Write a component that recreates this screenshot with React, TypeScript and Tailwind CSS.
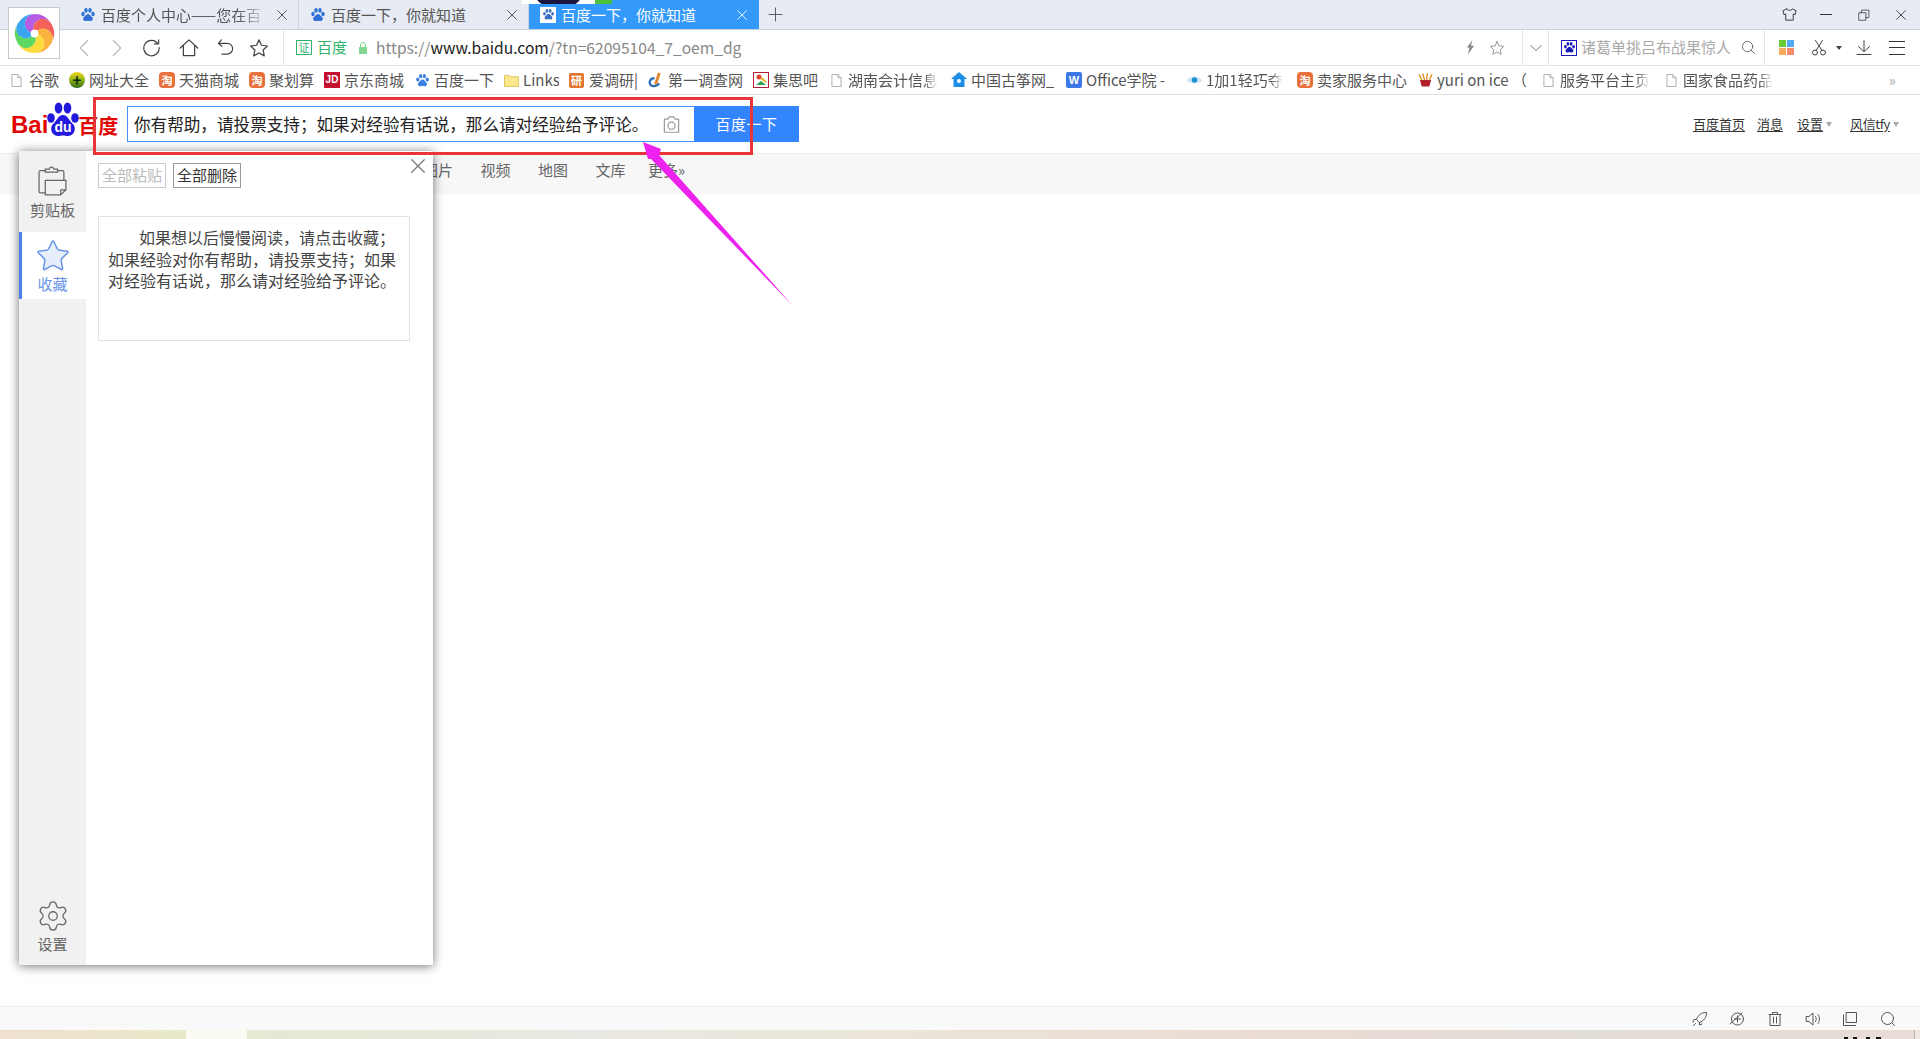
import React from 'react';
import { Settings, Star } from 'lucide-react';

const Paw = ({ className = '', color = '#2f6fd6' }: { className?: string; color?: string }) => (
  <svg viewBox="0 0 16 16" className={className} fill={color}>
    <ellipse cx="3" cy="7" rx="1.7" ry="2.2" />
    <ellipse cx="6" cy="3.4" rx="1.7" ry="2.3" />
    <ellipse cx="10" cy="3.4" rx="1.7" ry="2.3" />
    <ellipse cx="13" cy="7" rx="1.7" ry="2.2" />
    <path d="M8 7c-2 0-2.400 2-4 3-1.600 1.200-.8 4 1.500 4 1 0 1.600-.3 2.500-.3s1.500.3 2.500.3c2.300 0 3.100-2.800 1.500-4-1.600-1-2-3-4-3z" />
  </svg>
);

const Swirl = () => {
  const colors = ['#b45ce6', '#f4605a', '#fbb23e', '#fbdc3c', '#5fd861', '#3ba6ee'];
  return (
    <svg viewBox="-21 -21 42 42" className="w-[41px] h-[41px]">
      {colors.map((c, i) => (
        <path key={c} transform={`rotate(${i * 60})`} fill={c} d="M0 0A10 10 0 0 1 0-20A20 20 0 0 1 17.320-10A10 10 0 0 0 0 0Z" />
      ))}
      <circle r="4" fill="#fff" />
    </svg>
  );
};

const Line = ({ children, className = '', box = '0 0 16 16' }: { children: React.ReactNode; className?: string; box?: string }) => (
  <svg viewBox={box} className={className} fill="none" stroke="currentColor" strokeWidth="1" strokeLinecap="round" strokeLinejoin="round">
    {children}
  </svg>
);

const XIcon = ({ className = '' }: { className?: string }) => (
  <Line className={className}><path d="M3 3l10 10M13 3L3 13" /></Line>
);

const PageIcon = () => (
  <svg viewBox="0 0 12 14" className="w-[11px] h-[13px] shrink-0" fill="#fff" stroke="#a9a9a9">
    <path d="M1 .5h6.500L11 4v9.500H1z" />
    <path d="M7.500.5V4H11" fill="none" />
  </svg>
);

const Tao = () => (
  <span className="w-[16px] h-[16px] shrink-0 rounded-[4px] bg-[#e9703a] text-white text-[11px] leading-[16px] text-center font-bold">淘</span>
);

const favicon = (kind: string) => {
  switch (kind) {
    case 'page':
      return <PageIcon />;
    case 'globe':
      return (
        <span className="w-[16px] h-[16px] shrink-0 rounded-full bg-gradient-to-b from-[#f2d61c] via-[#8fb51a] to-[#2c6a12] text-[#0c2a10] text-[15px] leading-[15px] text-center font-bold">+</span>
      );
    case 'tao':
      return <Tao />;
    case 'jd':
      return <span className="w-[16px] h-[16px] shrink-0 bg-[#c4112f] text-white text-[10px] leading-[16px] text-center font-bold font-['Liberation_Sans',sans-serif]">JD</span>;
    case 'paw':
      return <Paw className="w-[15px] h-[15px] shrink-0" color="#3b7fe0" />;
    case 'folder':
      return (
        <svg viewBox="0 0 16 14" className="w-[15px] h-[13px] shrink-0" fill="#fbe88d" stroke="#dcc156">
          <path d="M.5 1.500h5.500l1 1.500h8.500v10.500H.5z" />
        </svg>
      );
    case 'yan':
      return <span className="w-[15px] h-[15px] shrink-0 rounded-[2px] bg-[#e2752f] text-white text-[11px] leading-[15px] text-center font-bold">研</span>;
    case 'd':
      return (
        <svg viewBox="0 0 16 16" className="w-[15px] h-[16px] shrink-0" fill="none">
          <path d="M12 .5L8 13" stroke="#e8862a" strokeWidth="3" />
          <path d="M7 6C2 6 .5 11 3 13.500c2.500 2 7 1 9-2" stroke="#2d6db5" strokeWidth="2.400" />
        </svg>
      );
    case 'jisi':
      return (
        <svg viewBox="0 0 16 16" className="w-[16px] h-[16px] shrink-0">
          <rect x=".5" y=".5" width="15" height="15" fill="#fff" stroke="#b32036" />
          <path d="M3 13l5-4 5 4z" fill="#2e9e4f" />
          <circle cx="6" cy="5" r="2.500" fill="#e0402f" />
          <path d="M8 6l5 4" stroke="#e8b21f" strokeWidth="2" />
        </svg>
      );
    case 'house':
      return (
        <svg viewBox="0 0 16 16" className="w-[16px] h-[16px] shrink-0" fill="#1b8fe8">
          <path d="M8 0l8 7h-2.500v8h-11V7H0z" />
          <circle cx="8" cy="9" r="2" fill="#fff" />
        </svg>
      );
    case 'office':
      return <span className="w-[16px] h-[16px] shrink-0 rounded-[2px] bg-[#3c78e6] text-white text-[11px] leading-[16px] text-center font-bold font-['Liberation_Sans',sans-serif]">W</span>;
    case 'eye':
      return (
        <svg viewBox="0 0 18 12" className="w-[17px] h-[11px] shrink-0">
          <path d="M0 6c4-6 13-6 18 0-5 4-14 4-18 0z" fill="#cfe6f5" />
          <circle cx="9" cy="5.500" r="3" fill="#1f8fd0" />
        </svg>
      );
    default:
      return (
        <svg viewBox="0 0 16 14" className="w-[15px] h-[14px] shrink-0">
          <path d="M2 7h12l-2 7H4z" fill="#b3202c" />
          <path d="M1 1l3 6M5 0l2 7M10 0L9 7M15 1l-3 6" stroke="#e0962a" strokeWidth="1.500" />
        </svg>
      );
  }
};

const bookmarks = [
  { kind: 'page', text: '谷歌', w: 'w-[58px]', gap: 'gap-[7px]' },
  { kind: 'globe', text: '网址大全', w: 'w-[90px]', gap: 'gap-[4px]' },
  { kind: 'tao', text: '天猫商城', w: 'w-[90px]', gap: 'gap-[4px]' },
  { kind: 'tao', text: '聚划算', w: 'w-[75px]', gap: 'gap-[4px]' },
  { kind: 'jd', text: '京东商城', w: 'w-[91px]', gap: 'gap-[4px]' },
  { kind: 'paw', text: '百度一下', w: 'w-[89px]', gap: 'gap-[4px]' },
  { kind: 'folder', text: 'Links', w: 'w-[65px]', gap: 'gap-[4px]' },
  { kind: 'yan', text: '爱调研|', w: 'w-[79px]', gap: 'gap-[5px]' },
  { kind: 'd', text: '第一调查网', w: 'w-[105px]', gap: 'gap-[5px]' },
  { kind: 'jisi', text: '集思吧', w: 'w-[78px]', gap: 'gap-[4px]' },
  { kind: 'page', text: '湖南会计信息', w: 'w-[120px]', gap: 'gap-[6px]', fade: true },
  { kind: 'house', text: '中国古筝网_', w: 'w-[115px]', gap: 'gap-[4px]' },
  { kind: 'office', text: 'Office学院 -', w: 'w-[120px]', gap: 'gap-[4px]' },
  { kind: 'eye', text: '1加1轻巧夺', w: 'w-[111px]', gap: 'gap-[3px]', fade: true },
  { kind: 'tao', text: '卖家服务中心', w: 'w-[121px]', gap: 'gap-[4px]' },
  { kind: 'yuri', text: 'yuri on ice （', w: 'w-[125px]', gap: 'gap-[4px]' },
  { kind: 'page', text: '服务平台主页', w: 'w-[123px]', gap: 'gap-[6px]', fade: true },
  { kind: 'page', text: '国家食品药品', w: 'w-[117px]', gap: 'gap-[6px]', fade: true },
];

const TabItem = ({ title, active = false, fade = false }: { title: string; active?: boolean; fade?: boolean }) => (
  <div className={`w-[230px] flex items-center ${active ? 'pl-[11px] bg-[#3399fa] text-white' : 'pl-[11px] text-[#555] border-r border-[#cfd4dd]'}`}>
    {active ? (
      <span className="w-[16px] h-[16px] bg-white flex items-center justify-center shrink-0">
        <Paw className="w-[13px] h-[13px]" color="#3f6fc4" />
      </span>
    ) : (
      <Paw className="w-[16px] h-[16px] shrink-0" />
    )}
    <span className={`ml-[5px] w-[167px] text-[15px] leading-[22px] whitespace-nowrap overflow-hidden ${fade ? "[mask-image:linear-gradient(to_right,black_82%,transparent)]" : ''}`}>{title}</span>
    <XIcon className={`w-[14px] h-[14px] ml-[7px] shrink-0 ${active ? 'text-white' : 'text-[#444]'}`} />
  </div>
);

const NavLink = ({ children, className = '' }: { children: React.ReactNode; className?: string }) => (
  <span className={`w-[30px] text-[15px] leading-[20px] text-[#666] whitespace-nowrap ${className}`}>{children}</span>
);

export default function App() {
  return (
    <div className="relative w-[1920px] h-[1039px] overflow-hidden bg-white flex flex-col font-['Noto_Sans_CJK_SC','Noto_Sans',sans-serif] text-[#444]">
      {/* tabs */}
      <div className="h-[30px] shrink-0 bg-[#e7ebf4] border-b border-[#cdd2da] flex pl-[69px]">
        <TabItem title="百度个人中心——您在百" fade />
        <TabItem title="百度一下，你就知道" />
        <TabItem title="百度一下，你就知道" active />
        <Line className="w-[15px] h-[15px] ml-[9px] self-center text-[#555]">
          <path d="M8 1v14M1 8h14" />
        </Line>
        <div className="ml-auto pr-[12px] flex items-center text-[#333]">
          <Line className="w-[15px] h-[15px]">
            <path d="M5 2L1 4l1 4 2-.5V14h8V7.500l2 .5 1-4-4-2c-.5 2-5.500 2-6 0z" />
          </Line>
          <span className="ml-[23px] w-[12px] h-px bg-[#333]" />
          <Line className="ml-[26px] w-[12px] h-[12px]">
            <path d="M1.500 5h9v10h-9zM4.500 5V1.500h10v10h-4" />
          </Line>
          <XIcon className="ml-[24px] w-[14px] h-[14px]" />
        </div>
      </div>

      {/* toolbar */}
      <div className="h-[36px] shrink-0 border-b border-[#e4e4e4] flex items-center">
        <div className="w-[67px] shrink-0" />
        <div className="w-[33px] flex justify-center text-[#bdbdbd]">
          <Line className="w-[20px] h-[20px]"><path d="M11 2L5 8l6 6" /></Line>
        </div>
        <div className="w-[33px] flex justify-center text-[#bdbdbd]">
          <Line className="w-[20px] h-[20px]"><path d="M5 2l6 6-6 6" /></Line>
        </div>
        <div className="w-[37px] flex justify-center text-[#444]">
          <Line className="w-[19px] h-[19px]"><path d="M13.500 5A6.500 6.500 0 1 0 14.500 8M14 1.500V5h-3.500" /></Line>
        </div>
        <div className="w-[38px] flex justify-center text-[#444]">
          <Line className="w-[20px] h-[20px]"><path d="M1 8l7-6.500L15 8M3.500 6.500V14h9V6.500" /></Line>
        </div>
        <div className="w-[34px] flex justify-center text-[#444]">
          <Line className="w-[19px] h-[19px]"><path d="M4.500 1.500L2 4.500l3 2.500M2.500 4.500h7a4.500 4.500 0 0 1 0 9H5" /></Line>
        </div>
        <div className="w-[34px] flex justify-center text-[#444]">
          <Line className="w-[20px] h-[20px]"><path d="M8 1.500l2 4.300 4.700.6-3.400 3.200.9 4.700L8 12l-4.200 2.300.9-4.700L1.300 6.400 6 5.800z" /></Line>
        </div>
        <div className="w-[8px] self-stretch border-r border-[#e6e6e6]" />
        <div className="ml-[12px] flex items-center">
          <span className="w-[16px] h-[15px] border border-[#2fb56b] text-[#2fb56b] text-[11px] leading-[13px] text-center">证</span>
          <span className="ml-[5px] pb-[2px] text-[15px] leading-[20px] text-[#2fb56b]">百度</span>
          <svg viewBox="0 0 10 12" className="ml-[11px] w-[10px] h-[12px]" fill="#7fd88e">
            <path d="M1 5h8v7H1z" />
            <path d="M2.500 5V3a2.500 2.500 0 0 1 5 0v2" fill="none" stroke="#7fd88e" />
          </svg>
          <span className="ml-[8px] pb-[2px] text-[15.600px] leading-[20px] text-[#888] whitespace-nowrap">
            https://<span className="text-[#222]">www.baidu.com</span>/?tn=62095104_7_oem_dg
          </span>
        </div>
        <div className="ml-auto w-[462px] self-stretch flex items-center shrink-0">
          <div className="w-[24px] flex justify-center">
            <svg viewBox="0 0 10 16" className="w-[9px] h-[15px]" fill="#888">
              <path d="M7 0L1 8h3l-2 8 7-10H5.500z" />
            </svg>
          </div>
          <div className="w-[30px] flex justify-center text-[#999]">
            <Line className="w-[16px] h-[16px]"><path d="M8 1.500l2 4.300 4.700.6-3.400 3.200.9 4.700L8 12l-4.200 2.300.9-4.700L1.300 6.400 6 5.800z" /></Line>
          </div>
          <div className="w-[10px]" />
          <div className="w-[27px] self-stretch border-x border-[#e6e6e6] flex items-center justify-center text-[#666]">
            <Line className="w-[14px] h-[14px]"><path d="M2 5l6 6 6-6" /></Line>
          </div>
          <div className="w-[216px] self-stretch border-r border-[#e6e6e6] flex items-center pl-[12px]">
            <span className="w-[16px] h-[16px] bg-white border border-[#1a1ab8] flex items-center justify-center shrink-0">
              <Paw className="w-[13px] h-[13px]" color="#1a1ab8" />
            </span>
            <span className="ml-[4px] pb-[2px] w-[150px] text-[15px] leading-[20px] text-[#aaa] whitespace-nowrap">诸葛单挑吕布战果惊人</span>
            <Line className="ml-[10px] w-[15px] h-[15px] text-[#666]">
              <circle cx="7" cy="7" r="5.500" />
              <path d="M11 11l3.500 3.500" />
            </Line>
          </div>
          <div className="ml-[14px] w-[15px] h-[15px] grid grid-cols-2 gap-px">
            <span className="bg-[#66cc33]" />
            <span className="bg-[#55aaf5]" />
            <span className="bg-[#f9a95c]" />
            <span className="bg-[#f58a6a]" />
          </div>
          <Line className="ml-[17px] w-[16px] h-[19px] text-[#444]">
            <circle cx="4" cy="13" r="2.500" />
            <circle cx="12" cy="13" r="2.500" />
            <path d="M5 11L11.500 1M11 11L4.500 1" />
          </Line>
          <span className="ml-[9px] w-0 h-0 border-x-[3px] border-x-transparent border-t-[4px] border-t-[#444]" />
          <Line className="ml-[14px] w-[16px] h-[17px] text-[#444]">
            <path d="M8 1v11M2.500 7L8 12l5.500-5M1 15h14" />
          </Line>
          <div className="ml-[17px] w-[16px] h-[14px] flex flex-col justify-between">
            <span className="h-px bg-[#333]" />
            <span className="h-px bg-[#333]" />
            <span className="h-px bg-[#333]" />
          </div>
        </div>
      </div>

      {/* bookmarks */}
      <div className="h-[29px] shrink-0 border-b border-[#e2e2e2] flex items-center pl-[11px]">
        {bookmarks.map(b => (
          <div key={b.text} className={`${b.w} ${b.gap} shrink-0 flex items-center pr-[10px]`}>
            {favicon(b.kind)}
            <span className={`text-[15px] leading-[20px] text-[#555] whitespace-nowrap overflow-hidden ${b.fade ? "[mask-image:linear-gradient(to_right,black_85%,transparent)]" : ''}`}>{b.text}</span>
          </div>
        ))}
        <span className="ml-auto mr-[24px] text-[15px] leading-[20px] text-[#aaa]">»</span>
      </div>

      {/* baidu header */}
      <div className="h-[59px] shrink-0 border-b border-[#ebebeb] flex items-center">
        <div className="ml-[11px] mb-[9px] w-[116px] h-[35px] flex items-end">
          <span className="text-[24px] leading-[24px] font-bold text-[#e10601] font-['Liberation_Sans',sans-serif]">Bai</span>
          <svg viewBox="0 0 33 35" className="w-[35px] h-[35px] -ml-[3px] shrink-0" fill="#2319dc">
            <ellipse cx="5" cy="16" rx="3.800" ry="4.800" />
            <ellipse cx="12.500" cy="6" rx="3.800" ry="5.500" />
            <ellipse cx="21.500" cy="6" rx="3.800" ry="5.500" />
            <ellipse cx="29" cy="16" rx="3.800" ry="4.800" />
            <path d="M17 13c-5 0-6 6-10 9-3.500 3-2 12 5 12 2 0 3-.6 5-.6s3 .6 5 .6c7 0 8.500-9 5-12-4-3-5-9-10-9z" />
            <text x="17" y="30" textAnchor="middle" fontSize="14" fontWeight="700" fill="#fff" fontFamily="Liberation Sans, sans-serif">du</text>
          </svg>
          <span className="-ml-[2px] text-[20px] leading-[22px] font-bold text-[#e10601] whitespace-nowrap">百度</span>
        </div>
        <div className="w-[567px] h-[36px] border border-[#4791ff] border-r-0 flex items-center pl-[6px] shrink-0">
          <span className="w-[515px] text-[16.600px] leading-[24px] text-[#222] whitespace-nowrap">你有帮助，请投票支持；如果对经验有话说，那么请对经验给予评论。</span>
          <Line className="ml-[13px] w-[19px] h-[19px] text-[#9a9a9a]">
            <path d="M2 3.500h3L6 1.500h4l1 2h3v11H2z" />
            <circle cx="8" cy="9" r="3" />
          </Line>
        </div>
        <div className="w-[105px] h-[36px] bg-[#3385ff] text-white text-[15px] leading-[36px] text-center shrink-0 tracking-[0.5px]">百度一下</div>
        <div className="ml-auto pr-[21px] flex items-center text-[13px] leading-[20px] text-[#333]">
          <span className="underline underline-offset-2">百度首页</span>
          <span className="ml-[12px] underline underline-offset-2">消息</span>
          <span className="ml-[14px] underline underline-offset-2">设置</span>
          <span className="ml-[3px] w-0 h-0 border-x-[3px] border-x-transparent border-t-[5px] border-t-[#aaa]" />
          <span className="ml-[18px] underline underline-offset-2 tracking-[-0.4px]">风信tfy</span>
          <span className="ml-[3px] w-0 h-0 border-x-[3px] border-x-transparent border-t-[5px] border-t-[#aaa]" />
        </div>
      </div>

      {/* nav */}
      <div className="h-[40px] shrink-0 bg-[#f7f7f8] flex items-center pl-[423px] pb-[8px] gap-[27.500px]">
        <NavLink>图片</NavLink>
        <NavLink>视频</NavLink>
        <NavLink>地图</NavLink>
        <NavLink>文库</NavLink>
        <NavLink className="-ml-[5px]">更多»</NavLink>
      </div>

      <div className="flex-1 bg-white" />

      {/* bottom bar */}
      <div className="h-[24px] shrink-0 bg-[#f9f9fa] border-t border-[#efefef] flex items-center justify-end pr-[24px] gap-[21.700px] text-[#555]">
        <Line className="w-[16px] h-[16px]">
          <path d="M6 10L4.500 8.500C6 4 9.500 1.500 14.500 1.500c0 5-2.500 8.500-7 10zM4.500 8.500H2L1 11M7.500 11.500V14l2.500-1M1.500 14.500l2-2" />
        </Line>
        <Line className="w-[16px] h-[16px]">
          <circle cx="8.500" cy="8" r="6" />
          <path d="M8.500 5v6M5.500 8h6M1 13L13 2" />
        </Line>
        <Line className="w-[16px] h-[16px]">
          <path d="M2 3.500h12M5.500 3.500V1.500h5v2M3 3.500v11h10v-11M6.500 6v6M9.500 6v6" />
        </Line>
        <Line className="w-[16px] h-[16px]">
          <path d="M1.500 5.500H4L8 2v12l-4-3.500H1.500zM10.500 5.500c1 1.500 1 3.500 0 5M13 3.500c2 2.500 2 6.500 0 9" />
        </Line>
        <Line className="w-[16px] h-[16px]">
          <path d="M4.500 1.500h10v10h-10zM1.500 4v10.500h12" />
        </Line>
        <Line className="w-[16px] h-[16px]">
          <circle cx="7.500" cy="7.500" r="6" />
          <path d="M12 12l2.500 2.500" />
        </Line>
      </div>
      <div className="h-[9px] shrink-0 flex">
        <div className="w-[186px] bg-gradient-to-r from-[#efe2cf] to-[#e9e8c9]" />
        <div className="w-[61px] bg-[#fafaf3]" />
        <div className="flex-1 bg-[linear-gradient(to_right,#e4e9d2,#e9e8e2_20%,#ebe6da_35%,#eadcd4_60%,#e2dcd6_80%,#e8dcd6)] flex items-end">
          <div className="ml-auto mr-[33px] h-[2px] flex gap-[9px]">
            <span className="w-[13px] bg-[linear-gradient(to_right,#111_30%,transparent_30%,transparent_70%,#111_70%)]" />
            <span className="w-[15px] bg-[linear-gradient(to_right,#111_30%,transparent_30%,transparent_70%,#111_70%)]" />
          </div>
          <div className="h-full w-px bg-[#b8b0aa]" />
          <div className="h-full w-[5px] bg-[#efe6e0]" />
        </div>
      </div>

      {/* swirl browser logo */}
      <div className="absolute left-[8px] top-[7px] w-[52px] h-[52px] bg-white border border-[#c9c9c9] flex items-center justify-center">
        <Swirl />
      </div>

      {/* thumbnail peeking over the tab strip */}
      <div className="absolute left-[522px] top-0 w-[90px] h-[4px] flex overflow-hidden">
        <div className="w-[73px] bg-white flex justify-center">
          <span className="w-[45px] h-[10px] -mt-[5px] rounded-b-full bg-[#1a1640]" />
        </div>
        <div className="w-[17px] bg-[#4cc13c]" />
      </div>

      {/* side panel */}
      <div className="absolute left-[19px] top-[151px] w-[414px] h-[814px] bg-white shadow-[0_1px_10px_rgba(0,0,0,0.55)] flex">
        <div className="w-[67px] shrink-0 bg-[#f1f1f1] flex flex-col items-center">
          <div className="w-full h-[81px] flex flex-col items-center pt-[14px] text-[#666]">
            <svg viewBox="0 0 30 30" className="w-[31px] h-[33px]" fill="none" stroke="currentColor" strokeWidth="1.200" strokeLinejoin="round">
              <path d="M8 26H3.500A1.500 1.500 0 0 1 2 24.500V6a1.500 1.500 0 0 1 1.500-1.500H8M20 4.500h4.500A1.500 1.500 0 0 1 26 6v8" />
              <path d="M8 6V3h4a2 2 0 0 1 4 0h4v3z" />
              <path d="M8 14h20v9l-5 5H8z" fill="#f1f1f1" />
              <path d="M28 23h-5v5" />
            </svg>
            <span className="mt-[2px] text-[15px] leading-[20px]">剪贴板</span>
          </div>
          <div className="w-full h-[67px] bg-white border-l-[3px] border-[#4d80e6] flex flex-col items-center pt-[6px] text-[#6a95e8] pr-[3px]">
            <Star className="w-[36px] h-[36px]" strokeWidth={1} fill="#e6eefb" />
            <span className="text-[15px] leading-[20px]">收藏</span>
          </div>
          <div className="mt-auto mb-[11px] flex flex-col items-center text-[#666]">
            <Settings className="w-[34px] h-[34px]" strokeWidth={0.9} />
            <span className="mt-[1px] text-[15px] leading-[20px]">设置</span>
          </div>
        </div>
        <div className="relative flex-1 pl-[12px] pt-[12px]">
          <div className="flex gap-[7px]">
            <span className="w-[68px] h-[25px] border border-[#ccc] text-[#bbb] text-[15px] leading-[22px] text-center">全部粘贴</span>
            <span className="w-[68px] h-[25px] border border-[#999] text-[#333] text-[15px] leading-[22px] text-center">全部删除</span>
          </div>
          <div className="mt-[28px] w-[312px] h-[125px] border border-[#e2e2e2] px-[9px] pt-[10px] text-[16px] leading-[21.500px] text-[#444] indent-[31px]">
            如果想以后慢慢阅读，请点击收藏；如果经验对你有帮助，请投票支持；如果对经验有话说，那么请对经验给予评论。
          </div>
          <XIcon className="absolute right-[5px] top-[5px] w-[20px] h-[20px] text-[#777]" />
        </div>
      </div>

      {/* annotation: red box */}
      <div className="absolute left-[93px] top-[97px] w-[660px] h-[58px] border-[3px] border-[#e8353b]" />

      {/* annotation: arrow */}
      <svg viewBox="0 0 170 180" className="absolute left-[630px] top-[130px] w-[170px] h-[180px]" fill="#ee22ee">
        <polygon points="13,12 31,19 29,25 163,176 21,29 18,29" />
      </svg>
    </div>
  );
}
